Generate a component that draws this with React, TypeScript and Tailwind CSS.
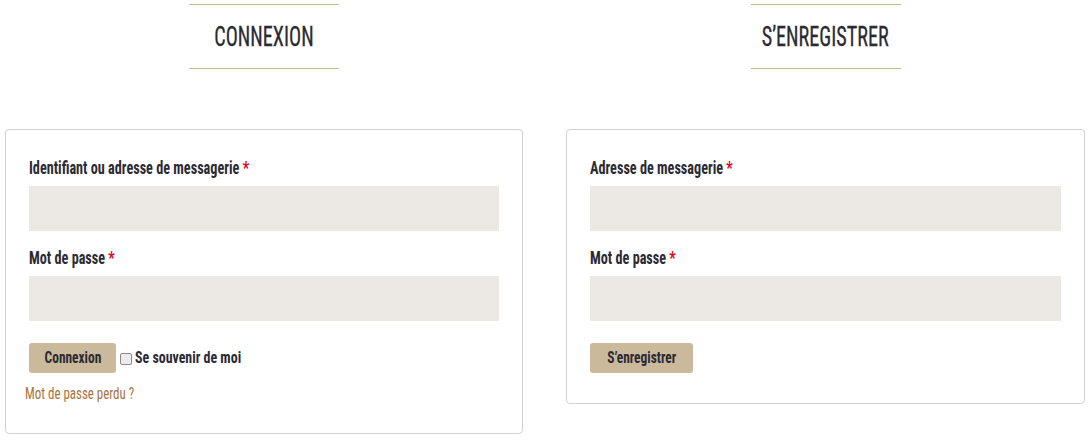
const font = "font-['Roboto_Condensed','Open_Sans_Condensed',sans-serif]";

function Label({ children }: { children: string }) {
  return (
    <label className="block h-[20px] leading-[20px] mt-[1px] mb-[8px] whitespace-nowrap">
      <span className="inline-block origin-left scale-x-[0.79] text-[18px] font-bold text-[#2b2a33]">
        {children} <span className="text-[#e2001a]">*</span>
      </span>
    </label>
  );
}

function Input({ type = "text" }: { type?: string }) {
  return <input type={type} className="block w-full h-[45px] bg-[#ece9e4] outline-none border-0" />;
}

function Heading({ children }: { children: string }) {
  return (
    <div className="mt-[4px] w-[150px] h-[65px] border-t border-b border-[#c9b896] flex items-center justify-center whitespace-nowrap">
      <h2 className="inline-block scale-x-[0.72] text-[28px] leading-none font-normal text-[#2b2a33] uppercase [-webkit-text-stroke:0.3px_#2b2a33]">{children}</h2>
    </div>
  );
}

function Button({ children, width }: { children: string; width: string }) {
  return (
    <button className={`${width} h-[30px] bg-[#cbb99b] rounded-[3px] flex items-center justify-center whitespace-nowrap`}>
      <span className="inline-block scale-x-[0.79] text-[17px] font-bold text-[#2b2a33]">{children}</span>
    </button>
  );
}

export default function App() {
  return (
    <div className={`${font} w-[1092px] h-[442px] bg-white flex pl-[5px] pr-[7px] gap-[43px]`}>
      <div className="w-[518px] flex flex-col items-center">
        <Heading>Connexion</Heading>
        <div className="mt-[60px] w-full border border-[#d2d2d2] rounded-[4px] px-[23px] pt-[27px] pb-[30px]">
          <Label>Identifiant ou adresse de messagerie</Label>
          <Input />
          <div className="h-[16px]" />
          <Label>Mot de passe</Label>
          <Input type="password" />
          <div className="mt-[22px] flex items-center">
            <Button width="w-[87px]">Connexion</Button>
            <label className="ml-[4px] flex items-center whitespace-nowrap">
              <input type="checkbox" className="appearance-none w-[12px] h-[12px] m-0 mr-[3px] mt-[1px] border border-[#8a8a8a] rounded-[2px] bg-[#ececec]" />
              <span className="inline-block origin-left scale-x-[0.82] text-[17px] font-bold text-[#2b2a33]">Se souvenir de moi</span>
            </label>
          </div>
          <a className="block -ml-[4px] mt-[10px] h-[20px] leading-[20px] whitespace-nowrap">
            <span className="inline-block origin-left scale-x-[0.76] text-[17px] text-[#a8743f]">Mot de passe perdu ?</span>
          </a>
        </div>
      </div>
      <div className="flex-1 flex flex-col items-center">
        <Heading>S’enregistrer</Heading>
        <div className="mt-[60px] w-full border border-[#d2d2d2] rounded-[4px] px-[23px] pt-[27px] pb-[30px]">
          <Label>Adresse de messagerie</Label>
          <Input type="email" />
          <div className="h-[16px]" />
          <Label>Mot de passe</Label>
          <Input type="password" />
          <div className="mt-[22px] flex items-center">
            <Button width="w-[103px]">S’enregistrer</Button>
          </div>
        </div>
      </div>
    </div>
  );
}
